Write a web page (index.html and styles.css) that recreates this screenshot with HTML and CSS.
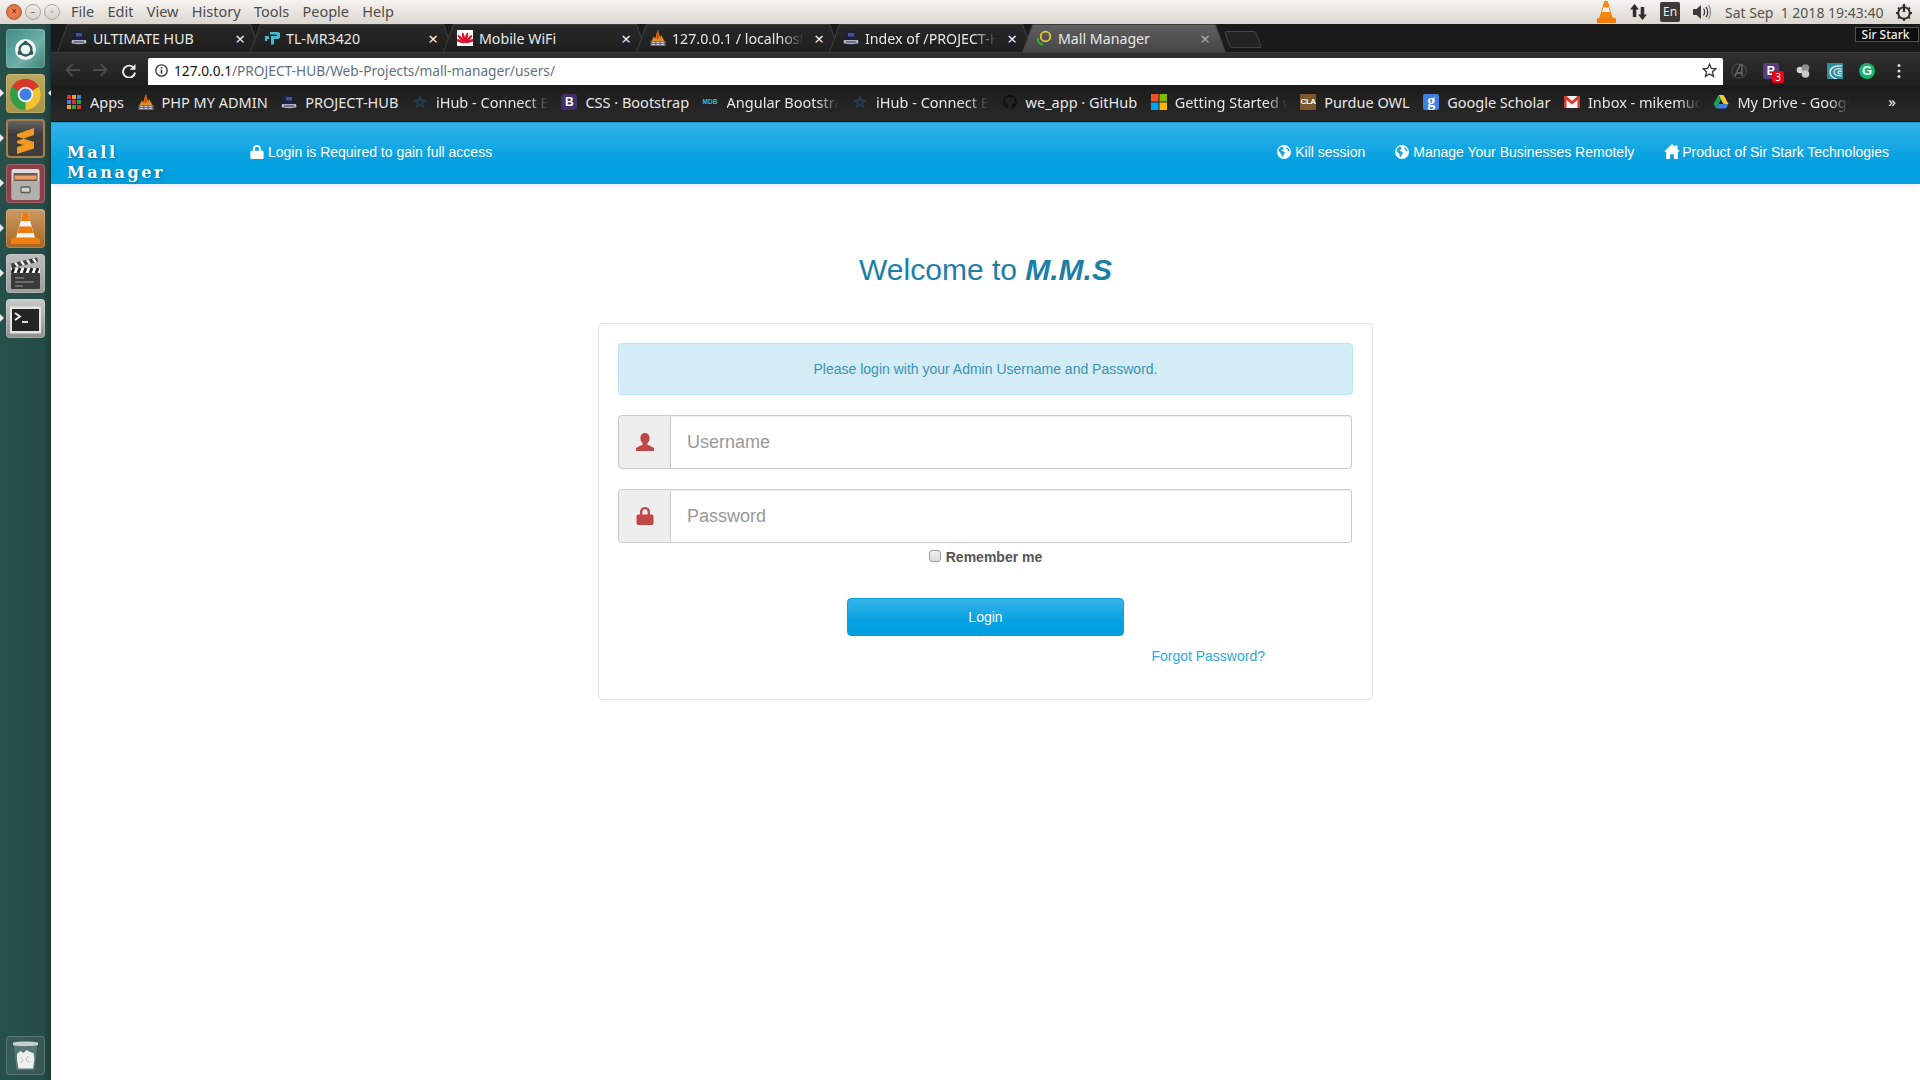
FILE: index.html
```html
<!DOCTYPE html>
<html lang="en">
<head>
<meta charset="utf-8">
<title>Mall Manager</title>
<link rel="stylesheet" href="styles.css">
</head>
<body>
<svg class="defs" width="0" height="0" aria-hidden="true">
  <defs>
    <symbol id="i-user" viewBox="0 0 18 18"><path d="M9 0c3 0 4.600 2.300 4.600 5 0 2.300-1 4.300-2.200 5.300v1.400c2.300 1 5 2.100 6.600 3.400V18H0v-2.900c1.600-1.300 4.300-2.400 6.600-3.400v-1.400C5.400 9.300 4.400 7.300 4.400 5 4.400 2.300 6 0 9 0z"/></symbol>
    <symbol id="i-lock" viewBox="0 0 18 18"><path fill-rule="evenodd" d="M9 0c3 0 5 2 5 5v2.500h1.800c.9 0 1.700.8 1.700 1.700v7.100c0 .9-.8 1.700-1.700 1.700H2.200c-.9 0-1.700-.8-1.700-1.700V9.200c0-.9.8-1.700 1.700-1.700H4V5c0-3 2-5 5-5zm0 2.200C7.300 2.200 6.400 3.400 6.400 5v2.500h5.200V5c0-1.600-.9-2.800-2.600-2.800z"/></symbol>
    <symbol id="i-globe" viewBox="0 0 16 16"><path fill-rule="evenodd" d="M8 0a8 8 0 1 1 0 16A8 8 0 0 1 8 0zM5.600 1.800C3.500 2.700 2 4.500 1.600 6.800c.8.500 1.500 1 1.800 1.900.3 1 1.300 1 1.700 1.800.3.800-.2 1.700.4 2.500.4.500 1 .6 1.300.1.500-1 .6-2 1.400-2.800 1-.9 1-2-.1-2.700-.9-.6-2-.4-2.700-1.100-.4-.5.100-1 .7-1 1 0 1.300-.6 1.400-1.300.1-.9-.9-1.600-1.900-2.400zM11.300 2.600c-.8.300-1 1.100-.5 1.700.5.500 1 .4 1.300 1 .3.500.1 1.100.6 1.500.7.400 1.300.1 1.700-.3-.4-1.600-1.500-3-3.100-3.900z"/></symbol>
    <symbol id="i-home" viewBox="0 0 17 16"><path d="M8.500 0l3.600 3.300V1.200h2.300v4.300L17 8h-2.300v8h-4.200v-5h-4v5H2.300V8H0z"/></symbol>
    <symbol id="f-server" viewBox="0 0 16 16"><path d="M3.500 1h9l.5 8H3z" fill="#1c1f40"/><rect x="5" y="3" width="6" height="3.500" fill="#4a4f98"/><path d="M1 10h14l.5 3c-2 1.500-13 1.500-15 0z" fill="#aeb2c2"/><path d="M3 12h10" stroke="#34364e"/></symbol>
    <symbol id="f-pma" viewBox="0 0 16 16"><path d="M1 12L4 6l1 3 3-9 2 8 1-3 4 7z" fill="#e98d1f"/><path d="M6 4l2-4 1 8-2 2z" fill="#c9500f"/><rect x="0.500" y="11" width="15" height="5" fill="#6f7080"/><path d="M2 12.500h3M6.500 12.500h3M11 12.500h3M2 14.500h3M6.500 14.500h3M11 14.500h3" stroke="#c8c8d4"/></symbol>
    <symbol id="f-star" viewBox="0 0 16 16"><path d="M8 1l2 4.600 5 .4-3.800 3.300 1.200 4.900L8 11.600 3.600 14.200l1.200-4.900L1 6l5-.4z" fill="#2b3e4e"/><path d="M8 5l.8 2.200 2.300.1-1.800 1.400.6 2.200L8 9.700l-1.900 1.200.6-2.200-1.800-1.400 2.300-.1z" fill="#1c2630"/></symbol>
  </defs>
</svg>

<header class="menubar">
  <div class="winbtns">
    <span class="winbtn close">×</span>
    <span class="winbtn">–</span>
    <span class="winbtn">▫</span>
  </div>
  <nav class="menus">
    <span>File</span><span>Edit</span><span>View</span><span>History</span><span>Tools</span><span>People</span><span>Help</span>
  </nav>
  <div class="tray">
    <svg class="tray-cone" width="19" height="23" viewBox="0 0 19 23"><path d="M7.300 0h3.400l5 17H2.300z" fill="#f08a12"/><path d="M6.200 6.500h5.600l1 4.500H5.200z" fill="#f5f1ea"/><path d="M0 17.500c2-.8 3-1 3-1h13s1.200.3 3 1v4.500H0z" fill="#ef7d0c"/></svg>
    <svg class="tray-arrows" width="17" height="18" viewBox="0 0 17 18"><path d="M4.500 1L9 6.500H6.300V14H2.800V6.500H0z" fill="#2f2f2c"/><path d="M12.500 17L8 11.500h2.700V4h3.500v7.500H17z" fill="#2f2f2c"/></svg>
    <span class="tray-lang">En</span>
    <svg class="tray-vol" width="19" height="16" viewBox="0 0 19 16"><path d="M0 5h3.500L8 1v14l-4.500-4H0z" fill="#3c3b37"/><path d="M10.500 4.500c1.300 2 1.300 5 0 7M13 2.800c2 3 2 7.400 0 10.400" fill="none" stroke="#3c3b37" stroke-width="1.300"/><path d="M15.500 1c2.700 4 2.700 10 0 14" fill="none" stroke="#8a8880" stroke-width="1.200"/></svg>
    <span class="tray-date">Sat Sep &nbsp;1 2018 19:43:40</span>
    <svg class="tray-power" width="18" height="18" viewBox="0 0 18 18"><circle cx="9" cy="10" r="5.800" fill="none" stroke="#2f2f2c" stroke-width="2"/><path d="M9 1v8" stroke="#2f2f2c" stroke-width="2.400"/><path d="M9 1.500v2M9 16v2M1 10h2M15 10h2M3 4.500l1.400 1.400M15 4.500l-1.400 1.400M3 15.500l1.400-1.400M15 15.500l-1.400-1.400" stroke="#2f2f2c" stroke-width="1.800"/></svg>
  </div>
</header>

<div class="desk">
  <aside class="launcher">
    <div class="lnc dash">
      <svg width="39" height="39" viewBox="0 0 39 39"><circle cx="19.500" cy="19.500" r="10.500" fill="#f2f6f5"/><circle cx="19.500" cy="19.500" r="6" fill="none" stroke="#2f5e59" stroke-width="2.300"/><circle cx="19.500" cy="12.800" r="2.100" fill="#2f5e59"/><circle cx="13.700" cy="22.900" r="2.100" fill="#2f5e59"/><circle cx="25.300" cy="22.900" r="2.100" fill="#2f5e59"/></svg>
    </div>
    <div class="lnc chrome pip pip-both">
      <svg width="39" height="39" viewBox="0 0 39 39"><circle cx="19.500" cy="19.500" r="15.500" fill="#2f9e45"/><path d="M19.500 4a15.500 15.500 0 0 1 13.400 7.800L19.500 19.500 6 11.800A15.500 15.500 0 0 1 19.500 4z" fill="#d8382c"/><path d="M32.900 11.800a15.500 15.500 0 0 1-13.400 23.200l0-15.500z" fill="#f2c230"/><circle cx="19.500" cy="19.500" r="7.800" fill="#f2f2f2"/><circle cx="19.500" cy="19.500" r="6" fill="#3f7fe0"/></svg>
    </div>
    <div class="lnc sublime pip">
      <svg width="39" height="39" viewBox="0 0 39 39"><path d="M28 8L11 14v7l17-6zM11 16.500l17 5.500v6.500L11 23zM28 21.500v7L11 34v-7z" fill="#f09a24"/></svg>
    </div>
    <div class="lnc files pip">
      <svg width="39" height="39" viewBox="0 0 39 39"><rect x="5.500" y="4" width="28" height="31" rx="2" fill="#dcdcda"/><rect x="7.500" y="8" width="24" height="9" fill="#6f5a4c"/><path d="M8.500 10.500h22v4h-22z" fill="#eda06a"/><rect x="6" y="16" width="27" height="19" rx="1" fill="#b0b0ae"/><rect x="15" y="22" width="9" height="5.500" rx="1" fill="#d4d4d2" stroke="#5c5c5a" stroke-width="1.300"/></svg>
    </div>
    <div class="lnc vlc pip">
      <svg width="39" height="39" viewBox="0 0 39 39"><path d="M17 3h5l7 25H10z" fill="#f5f3ef"/><path d="M17 3h5l2 8h-9z" fill="#ee7a0e"/><path d="M13.500 16.500h12l1.800 6.500H11.700z" fill="#ee7a0e"/><path d="M5 29c2-1 4-1.500 5-1.500h19c1 0 3 .5 5 1.500v5H5z" fill="#f0800e"/></svg>
    </div>
    <div class="lnc clap pip">
      <svg width="39" height="39" viewBox="0 0 39 39"><path d="M5 8.500L31 2.500l1 4.500L6 13z" fill="#3a3a3a"/><path d="M9 7.500l3 4M15 6l3 4M21 5l3 4M27 3.500l3 4" stroke="#eee" stroke-width="2.400"/><rect x="5" y="13" width="29" height="5" fill="#fff"/><path d="M8 13l-2 5M14 13l-2 5M20 13l-2 5M26 13l-2 5M32 13l-2 5" stroke="#222" stroke-width="3"/><rect x="5" y="18" width="29" height="16" rx="1" fill="#3a3a3a"/><path d="M9 23h9M9 27h19M9 31h8" stroke="#999" stroke-width="1.200"/></svg>
    </div>
    <div class="lnc term pip">
      <svg width="39" height="39" viewBox="0 0 39 39"><rect x="4" y="6.500" width="31" height="27" rx="1" fill="#e4e4e2"/><rect x="6" y="9" width="27" height="22" fill="#242424"/><path d="M9 13l5 3.500-5 3.500" fill="none" stroke="#f2f2f2" stroke-width="1.800"/><path d="M16 22h6" stroke="#f2f2f2" stroke-width="1.800"/></svg>
    </div>
    <div class="lnc trash">
      <svg width="39" height="39" viewBox="0 0 39 39"><path d="M8 9l2.500 25h18L31 9" fill="#6e8a85" opacity=".6"/><path d="M7 6.500c3-1.500 22-1.500 25 0v2.500c-3 1.500-22 1.500-25 0z" fill="#c8cfcc"/><path d="M11 18l3.500-3 3 2 3-3 3.500 2 3.500 1 1 6-1.500 9.500H12.500L11 24z" fill="#eef0ef"/><path d="M14 21l3 3-2 3M22 20l-2 4 4 3" fill="none" stroke="#b4bab8"/></svg>
    </div>
  </aside>

  <main class="browser">
    <div class="tabstrip">
      <div class="tab"><svg class="fav"><use href="#f-server"/></svg><span class="tab-title">ULTIMATE HUB</span><span class="tab-x">×</span></div>
      <div class="tab"><svg class="fav" viewBox="0 0 16 16"><path d="M6 2h7a3 3 0 0 1 0 7h-3v5.500H7V6h5.500a.8.800 0 0 0 0-1.500H6z" fill="#3fc0cf"/><path d="M1 6h4v3H3v2H1z" fill="#3fc0cf"/></svg><span class="tab-title">TL-MR3420</span><span class="tab-x">×</span></div>
      <div class="tab"><svg class="fav" viewBox="0 0 16 16"><rect width="16" height="16" fill="#fff"/><g fill="#d9122a"><ellipse class="petal-a" cx="8" cy="7.500" rx="1.300" ry="5"/><ellipse class="petal-b" cx="8" cy="7.500" rx="1.300" ry="5"/><ellipse class="petal-c" cx="8" cy="7.500" rx="1.300" ry="5"/><ellipse class="petal-d" cx="8" cy="7.500" rx="1.300" ry="5"/><ellipse class="petal-e" cx="8" cy="7.500" rx="1.300" ry="5"/><ellipse class="petal-f" cx="8" cy="7.500" rx="1.300" ry="5"/></g></svg><span class="tab-title">Mobile WiFi</span><span class="tab-x">×</span></div>
      <div class="tab"><svg class="fav"><use href="#f-pma"/></svg><span class="tab-title fade">127.0.0.1 / localhost | php</span><span class="tab-x">×</span></div>
      <div class="tab"><svg class="fav"><use href="#f-server"/></svg><span class="tab-title fade">Index of /PROJECT-HUB</span><span class="tab-x">×</span></div>
      <div class="tab active"><svg class="fav" viewBox="0 0 16 16"><path d="M2 8.500a5 5 0 0 0 5 6" fill="none" stroke="#22c33c" stroke-width="1.800"/><circle cx="9.500" cy="6.500" r="4.800" fill="none" stroke="#e5c830" stroke-width="1.800"/></svg><span class="tab-title">Mall Manager</span><span class="tab-x">×</span></div>
      <div class="newtab"></div>
      <div class="profile">Sir Stark</div>
    </div>

    <div class="toolbar">
      <svg class="tb-nav" width="15" height="14" viewBox="0 0 15 14"><path d="M15 7H2M7.500 1L1.500 7l6 6" fill="none" stroke="#4d4d4d" stroke-width="1.800"/></svg>
      <svg class="tb-nav tb-fwd" width="15" height="14" viewBox="0 0 15 14"><path d="M0 7h13M7.500 1l6 6-6 6" fill="none" stroke="#4d4d4d" stroke-width="1.800"/></svg>
      <svg class="tb-reload" width="14" height="14" viewBox="0 0 14 14"><path d="M12 4.200A6 6 0 1 0 13 8.500" fill="none" stroke="#eee" stroke-width="1.900"/><path d="M13.500 0v5.800H7.700z" fill="#eee"/></svg>
      <div class="omnibox">
        <svg class="omni-info" width="13" height="13" viewBox="0 0 13 13"><circle cx="6.500" cy="6.500" r="5.700" fill="none" stroke="#333" stroke-width="1.300"/><path d="M6.500 5.500v4.200M6.500 3v1.500" stroke="#333" stroke-width="1.500"/></svg>
        <span class="url"><b>127.0.0.1</b>/PROJECT-HUB/Web-Projects/mall-manager/users/</span>
        <svg class="omni-star" width="15" height="15" viewBox="0 0 15 15"><path d="M7.500 1.200l1.900 4.200 4.500.4-3.400 3 1 4.500-4-2.400-4 2.400 1-4.500-3.400-3 4.500-.4z" fill="none" stroke="#333" stroke-width="1.300"/></svg>
      </div>
      <div class="exts">
        <svg width="16" height="16" viewBox="0 0 16 16"><circle cx="8" cy="8" r="7.200" fill="none" stroke="#444" stroke-width="1.300"/><path d="M4 13L9 2h2v11M5.500 10H11" fill="none" stroke="#6a6a6a" stroke-width="1.500"/></svg>
        <span class="ext-b">B<i>3</i></span>
        <svg width="16" height="16" viewBox="0 0 16 16"><circle cx="5" cy="7" r="3.300" fill="#d5d5d5"/><circle cx="10.500" cy="5" r="3.800" fill="#8d8d8d"/><circle cx="10.500" cy="11" r="3.800" fill="#c9c9c9"/></svg>
        <svg width="16" height="16" viewBox="0 0 16 16"><rect width="16" height="16" fill="#2f8c9a"/><path d="M15 3C8 2 3 5 3 9s3 6 7 7M15 6C11 5 7 6 7 9s3 4 8 4M15 8.500c-2-1-4-.5-4 1s2 1.500 4 1" fill="none" stroke="#e9f6f7" stroke-width="1.200"/></svg>
        <span class="ext-g">G</span>
        <svg class="ext-more" width="4" height="16" viewBox="0 0 4 16"><circle cx="2" cy="2.500" r="1.500" fill="#ddd"/><circle cx="2" cy="8" r="1.500" fill="#ddd"/><circle cx="2" cy="13.500" r="1.500" fill="#ddd"/></svg>
      </div>
    </div>

    <div class="bookmarks">
      <div class="bm"><svg class="fav" viewBox="0 0 16 16"><path fill="#d8382c" d="M1 1h4v4H1z"/><path fill="#f0a020" d="M6 1h4v4H6z"/><path fill="#3f7fe0" d="M11 1h4v4h-4z"/><path fill="#3f7fe0" d="M1 6h4v4H1z"/><path fill="#d8382c" d="M6 6h4v4H6z"/><path fill="#2f9e45" d="M11 6h4v4h-4z"/><path fill="#f0a020" d="M1 11h4v4H1z"/><path fill="#2f9e45" d="M6 11h4v4H6z"/><path fill="#d8382c" d="M11 11h4v4h-4z"/></svg><span class="bm-text">Apps</span></div>
      <div class="bm"><svg class="fav"><use href="#f-pma"/></svg><span class="bm-text">PHP MY ADMIN</span></div>
      <div class="bm"><svg class="fav"><use href="#f-server"/></svg><span class="bm-text">PROJECT-HUB</span></div>
      <div class="bm"><svg class="fav"><use href="#f-star"/></svg><span class="bm-text fade">iHub - Connect Bootstrap</span></div>
      <div class="bm"><span class="fav-b">B</span><span class="bm-text">CSS · Bootstrap</span></div>
      <div class="bm"><span class="fav-mdb">MDB</span><span class="bm-text fade">Angular Bootstrap Material</span></div>
      <div class="bm"><svg class="fav"><use href="#f-star"/></svg><span class="bm-text fade">iHub - Connect Bootstrap</span></div>
      <div class="bm"><svg class="fav" viewBox="0 0 16 16"><path d="M8 1a7 7 0 0 0-2.200 13.600v-2.300c-2 .4-2.400-1-2.400-1-.6-1-1-1-1-1 1-.5 1.500.8 1.500.8.800 1.300 2 .8 2 .6 0-.7.400-1 .7-1.200C4.500 10 3 9.200 3 6.700c0-.8.300-1.400.7-1.900-.1-.2-.3-1 .1-1.900 0 0 .7-.2 2 .7a7 7 0 0 1 4.400 0c1.300-.9 2-.7 2-.7.400.9.200 1.700.1 1.900.4.500.7 1.100.7 1.900 0 2.500-1.500 3.300-3.600 3.500.3.300.6.800.6 1.500v2.900A7 7 0 0 0 8 1z" fill="#111"/></svg><span class="bm-text">we_app · GitHub</span></div>
      <div class="bm"><svg class="fav" viewBox="0 0 16 16"><path fill="#f25022" d="M0 0h7.500v7.500H0z"/><path fill="#7fba00" d="M8.500 0H16v7.500H8.500z"/><path fill="#00a4ef" d="M0 8.500h7.500V16H0z"/><path fill="#ffb900" d="M8.500 8.500H16V16H8.500z"/></svg><span class="bm-text fade">Getting Started with</span></div>
      <div class="bm"><span class="fav-cla">CLA</span><span class="bm-text">Purdue OWL</span></div>
      <div class="bm"><span class="fav-gs">g</span><span class="bm-text">Google Scholar</span></div>
      <div class="bm"><svg class="fav" viewBox="0 0 16 16"><rect y="2" width="16" height="12" fill="#f4f4f4"/><path d="M0 2h2.500L8 7l5.500-5H16v12h-2.500V6L8 10.500 2.500 6v8H0z" fill="#d33a2c"/></svg><span class="bm-text fade">Inbox - mikemuchiri</span></div>
      <div class="bm"><svg class="fav" viewBox="0 0 16 16"><path d="M5.500 1h5l5 9h-5z" fill="#f8c92a"/><path d="M5.500 1L.5 10l2.500 4.500L8 5.500z" fill="#17a05d"/><path d="M3 14.500h10l2.500-4.500h-10z" fill="#3f7fe0"/></svg><span class="bm-text fade">My Drive - Google Drive</span></div>
      <span class="bm-more">»</span>
    </div>

    <nav class="navbar">
      <div class="brand">Mall<br>Manager</div>
      <div class="nav-note"><svg class="ico14"><use href="#i-lock"/></svg>Login is Required to gain full access</div>
      <div class="nav-right">
        <span class="nav-item"><svg class="ico14"><use href="#i-globe"/></svg>Kill session</span>
        <span class="nav-item"><svg class="ico14"><use href="#i-globe"/></svg>Manage Your Businesses Remotely</span>
        <span class="nav-item nav-home"><svg class="ico15"><use href="#i-home"/></svg>Product of Sir Stark Technologies</span>
      </div>
    </nav>

    <section class="page">
      <h1 class="welcome">Welcome to <em>M.M.S</em></h1>
      <form class="card">
        <div class="alert">Please login with your Admin Username and Password.</div>
        <div class="field">
          <span class="addon"><svg class="ico18"><use href="#i-user"/></svg></span>
          <input class="control" type="text" placeholder="Username">
        </div>
        <div class="field">
          <span class="addon"><svg class="ico18"><use href="#i-lock"/></svg></span>
          <input class="control" type="password" placeholder="Password">
        </div>
        <label class="remember"><input class="check" type="checkbox">Remember me</label>
        <button class="login" type="button">Login</button>
        <div class="forgot-row"><a class="forgot" href="#">Forgot Password?</a></div>
      </form>
    </section>
  </main>
</div>
</body>
</html>
```

FILE: styles.css
```css
* { box-sizing: border-box; }
html, body { height: 100%; }
body { margin: 0; width: 1920px; height: 1080px; overflow: hidden; display: flex; flex-direction: column; font-family: "Liberation Sans", Arial, sans-serif; font-size: 14px; background: #fff; }
.defs { position: absolute; }

/* top menu bar */
.menubar { height: 24px; flex: none; display: flex; align-items: center; background: linear-gradient(#f6f4f1, #dbd6cf); color: #4c4c4c; font-family: "Noto Sans", sans-serif; font-size: 14.500px; }
.winbtns { display: flex; gap: 3px; padding-left: 6px; width: 71px; flex: none; }
.winbtn { width: 16px; height: 16px; border-radius: 50%; border: 1px solid #a9a59d; background: linear-gradient(#efedea, #d6d2cb); font-size: 10px; line-height: 13px; text-align: center; color: #6b6a66; }
.winbtn.close { background: radial-gradient(#f08a5e, #d9643a); border-color: #b75a36; color: #5a2a16; }
.menus { display: flex; gap: 13.300px; padding-bottom: 2px; }
.tray { margin-left: auto; display: flex; align-items: center; padding-right: 7px; font-size: 14px; }
.tray-cone { margin-right: 14px; }
.tray-arrows { margin-right: 13px; }
.tray-lang { width: 20px; height: 20px; background: #3c3b37; color: #eee; border-radius: 2px; font-size: 12px; line-height: 20px; text-align: center; margin-right: 13px; }
.tray-vol { margin-right: 13px; }
.tray-date { color: #55544f; width: 157px; white-space: nowrap; margin-right: 13px; }

.desk { flex: 1; display: flex; min-height: 0; }

/* launcher */
.launcher { width: 51px; flex: none; background: linear-gradient(90deg, #27504b, #264c47 85%, #1e3f3b); border-right: 1px solid #1a3532; display: flex; flex-direction: column; gap: 6px; padding: 5px 0 5px 6px; }
.lnc { width: 39px; height: 39px; border-radius: 4px; position: relative; box-shadow: inset 0 0 0 1px rgba(255,255,255,.18); flex: none; }
.lnc svg { display: block; transform: translateY(1px); }
.lnc.trash svg { transform: none; }
.dash { background: linear-gradient(135deg, #3f8d85, #6fb0a8 60%, #3f8178); }
.chrome { background: linear-gradient(#bba95f, #a8944a); }
.sublime { background: linear-gradient(#6a6a6a, #3e3c3a 40%); box-shadow: inset 0 0 0 2px #a87f48; }
.files { background: #8c414a; }
.vlc { background: linear-gradient(#cc9a62, #a5661f); }
.clap { background: linear-gradient(#bdbdbb, #9d9d9b); }
.term { background: linear-gradient(#c9c9c7, #8f8f8d); }
.trash { margin-top: auto; background: rgba(255,255,255,.08); }
.pip::before { content: ""; position: absolute; left: -6px; top: 15px; border: 4px solid transparent; border-left: 4px solid #e8e8e8; border-right: 0; }
.pip-both::after { content: ""; position: absolute; right: -7px; top: 15px; border: 4px solid transparent; border-right: 4px solid #e8e8e8; border-left: 0; }

.browser { flex: 1; min-width: 0; display: flex; flex-direction: column; }

/* tabs */
.tabstrip { height: 29px; flex: none; display: flex; background: #1a1a1a; padding-left: 6px; border-bottom: 1px solid #3b3b3b; color: #e8e8e8; font-family: "Noto Sans", sans-serif; font-size: 14.200px; position: relative; }
.tab { width: 204px; flex: none; margin-right: -11px; height: 28px; display: flex; align-items: center; padding: 0 15px 0 14px; position: relative; background: #3c3c3c; clip-path: polygon(10px 0, calc(100% - 10px) 0, 100% 100%, 0 100%); }
.tab::before { content: ""; position: absolute; inset: 1px 1px 0; background: linear-gradient(#282828, #1e1e1e); clip-path: polygon(10px 0, calc(100% - 10px) 0, 100% 100%, 0 100%); }
.tab.active::before { background: linear-gradient(#5e5e5e, #474747); }
.tab > * { position: relative; }
.fav { width: 16px; height: 16px; flex: none; display: block; }
.tab-title { flex: 1; min-width: 0; white-space: nowrap; overflow: hidden; margin-left: 6px; }
.tab-x { font-size: 17px; color: #eee; width: 12px; text-align: center; margin-left: 9px; }
.active .tab-x { color: #aaa; }
.fade { -webkit-mask-image: linear-gradient(90deg, #000 82%, transparent); mask-image: linear-gradient(90deg, #000 82%, transparent); }
.petal-a { transform: rotate(-70deg); transform-origin: 8px 13px; }
.petal-b { transform: rotate(-42deg); transform-origin: 8px 13px; }
.petal-c { transform: rotate(-14deg); transform-origin: 8px 13px; }
.petal-d { transform: rotate(14deg); transform-origin: 8px 13px; }
.petal-e { transform: rotate(42deg); transform-origin: 8px 13px; }
.petal-f { transform: rotate(70deg); transform-origin: 8px 13px; }
.newtab { width: 32px; height: 17px; margin: 7px 0 0 12px; background: #232323; border: 1px solid #444; border-radius: 2px; transform: skewX(20deg); flex: none; }
.profile { position: absolute; right: 1px; top: 3px; height: 15px; width: 64px; padding-right: 3px; background: #0d0d0d; border: 1px solid #555; font-size: 12px; line-height: 14px; text-align: center; color: #eee; font-weight: 500; }

/* toolbar */
.toolbar { height: 32px; flex: none; display: flex; align-items: flex-end; background: linear-gradient(#303030, #1f1f1f); padding-left: 14px; }
.tb-nav { margin: 0 13px 8px 0; }
.tb-fwd { margin-right: 14px; }
.tb-reload { margin: 0 12px 7px 0; }
.omnibox { width: 1575px; height: 27px; background: #fff; border-radius: 2px 2px 0 0; display: flex; align-items: center; padding: 0 6px 2px 7px; flex: none; font-family: "Noto Sans", sans-serif; font-size: 13.700px; color: #5f7183; }
.url { margin-left: 6px; white-space: nowrap; }
.url b { font-weight: 400; color: #111; }
.omni-star { margin-left: auto; }
.exts { display: flex; align-items: center; gap: 16px; height: 29px; padding-left: 8px; }
.ext-more { margin-left: 6px; }
.ext-b { width: 16px; height: 16px; background: #563d7c; color: #fff; font: 700 12px/16px "Liberation Sans", sans-serif; text-align: center; position: relative; border-radius: 2px; }
.ext-b i { position: absolute; left: 9px; top: 8px; width: 12px; height: 12px; background: #f00014; font: 400 10px/12px "Noto Sans", sans-serif; border-radius: 2px; }
.ext-g { width: 16px; height: 16px; border-radius: 50%; background: #15b36a; color: #fff; font: 700 13px/16px "Liberation Sans", sans-serif; text-align: center; }

/* bookmarks */
.bookmarks { height: 37px; flex: none; display: flex; align-items: center; background: linear-gradient(#1b1b1b, #2a2a2a); border-bottom: 1px solid #161616; padding: 0 0 2px 15px; color: #e6e6e6; font-family: "Noto Sans", sans-serif; font-size: 14.500px; position: relative; }
.bm { display: flex; align-items: center; margin-right: 13.500px; flex: none; }
.bm-text { margin-left: 8px; white-space: nowrap; }
.bm-text.fade { width: 112px; overflow: hidden; }
.bm-more { position: absolute; right: 24px; top: 6px; font-size: 15px; color: #eee; }
.fav-b { width: 16px; height: 16px; flex: none; background: #3f2f6c; color: #fff; font: 700 12px/16px "Liberation Sans", sans-serif; text-align: center; border-radius: 3px; }
.fav-mdb { width: 16px; flex: none; color: #2bbbda; font: 700 6.500px/16px "Liberation Sans", sans-serif; white-space: nowrap; }
.fav-cla { width: 16px; height: 16px; flex: none; background: #7b5a2c; color: #fff; font: 700 8px/16px "Liberation Sans", sans-serif; letter-spacing: -.4px; text-align: center; }
.fav-gs { width: 16px; height: 16px; flex: none; background: #3f7fe0; color: #fff; font: 700 16px/13px "Liberation Serif", serif; text-align: center; border-radius: 2px; }

/* navbar */
.navbar { height: 62px; flex: none; display: flex; align-items: center; background: linear-gradient(#34b3e9, #06a1e0 60%, #009fdf); color: #fff; padding: 0 31px 0 16px; box-shadow: 0 1px 0 #1a9ad0 inset, 0 2px 6px rgba(0,0,0,.08); position: relative; }
.brand { width: 182px; flex: none; font-family: "DejaVu Serif", serif; font-weight: 700; font-size: 16px; line-height: 20px; letter-spacing: 2.600px; text-shadow: 1px 1px 3px rgba(0,0,0,.3); padding-top: 19px; }
.nav-note, .nav-item { display: flex; align-items: center; gap: 4px; white-space: nowrap; }
.nav-note { margin-left: 1px; margin-top: -3px; }
.nav-right { margin-left: auto; display: flex; gap: 30px; margin-top: -3px; }
.nav-home { gap: 2px; }
.ico14 { width: 14px; height: 14px; fill: #fff; flex: none; }
.ico15 { width: 16px; height: 15px; fill: #fff; flex: none; }
.ico18 { width: 18px; height: 18px; fill: #c0474a; display: block; }

/* page */
.page { flex: 1; display: flex; flex-direction: column; align-items: center; }
.welcome { margin: 69px 0 37px; font-size: 30px; line-height: 33px; font-weight: 400; color: #1d7ea8; }
.welcome em { font-weight: 700; }
.card { width: 775px; height: 377px; border: 1px solid #e3e3e3; border-radius: 4px; padding: 19px; display: flex; flex-direction: column; align-items: center; }
.alert { width: 100%; height: 52px; flex: none; display: flex; align-items: center; justify-content: center; background: #d4ecf6; border: 1px solid #bce6f2; border-radius: 4px; color: #3a93b8; margin-bottom: 20px; }
.field { width: 734px; align-self: flex-start; height: 54px; flex: none; display: flex; margin-bottom: 20px; }
.addon { width: 53px; flex: none; display: flex; align-items: center; justify-content: center; background: #eee; border: 1px solid #ccc; border-radius: 4px 0 0 4px; }
.control { flex: 1; min-width: 0; border: 1px solid #ccc; border-left: 0; border-radius: 0 4px 4px 0; padding: 0 16px; font-family: "Liberation Sans", sans-serif; font-size: 18px; background: #fff; outline: 0; box-shadow: inset 0 1px 1px rgba(0,0,0,.075); }
.control::placeholder { color: #999; opacity: 1; }
.remember { display: flex; align-items: center; height: 20px; margin-top: -16px; font-weight: 700; color: #555; }
.check { appearance: none; width: 12px; height: 12px; margin: 0 5px 3px 0; border: 1px solid #9a9a9a; border-radius: 3px; background: linear-gradient(#f0f0f0, #dcdcdc); }
.login { width: 277px; height: 38px; flex: none; margin-top: 31px; border: 1px solid #0a9bd8; border-radius: 4px; background: linear-gradient(#37b4ea, #06a1e0 60%, #009fdf); color: #fff; font-family: "Liberation Sans", sans-serif; font-size: 14px; }
.forgot-row { width: 100%; display: flex; justify-content: flex-end; padding-right: 88px; margin-top: 10px; }
.forgot { color: #2fa8dc; text-decoration: none; line-height: 20px; }
```
